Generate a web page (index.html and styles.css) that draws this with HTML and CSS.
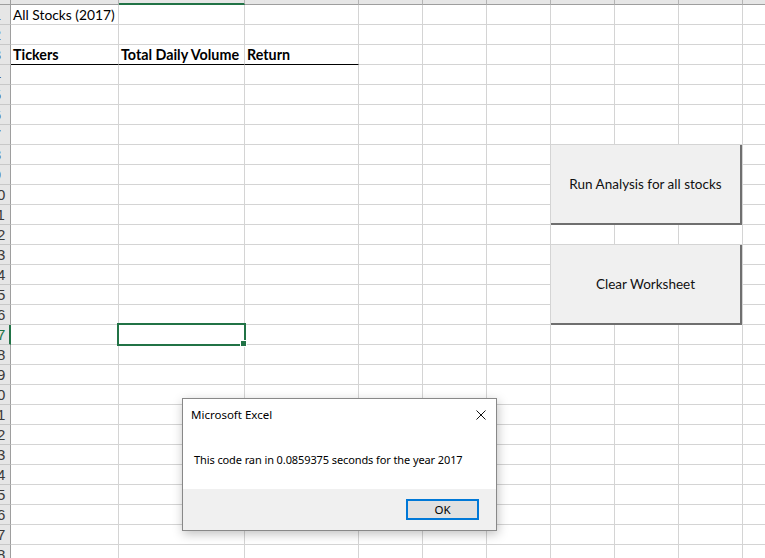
FILE: index.html
```html
<!DOCTYPE html>
<html>
<head>
<meta charset="utf-8">
<link rel="stylesheet" href="styles.css">
</head>
<body>
<div class="sheet">
  <div class="row colheads">
    <span class="ch corner"></span><span class="ch"></span><span class="ch sel"></span><span class="ch"></span><span class="ch"></span><span class="ch"></span><span class="ch"></span><span class="ch"></span><span class="ch"></span><span class="ch"></span><span class="ch"></span><span class="ch"></span>
  </div>
  <div class="row"><span class="rh"><span>1</span></span><span class="c txt">All Stocks (2017)</span><span class="c"></span><span class="c"></span><span class="c"></span><span class="c"></span><span class="c"></span><span class="c"></span><span class="c"></span><span class="c"></span><span class="c"></span><span class="c"></span></div>
  <div class="row"><span class="rh"><span>2</span></span><span class="c"></span><span class="c"></span><span class="c"></span><span class="c"></span><span class="c"></span><span class="c"></span><span class="c"></span><span class="c"></span><span class="c"></span><span class="c"></span><span class="c"></span></div>
  <div class="row"><span class="rh"><span>3</span></span><span class="c txt bold ruled">Tickers</span><span class="c txt bold ruled">Total Daily Volume</span><span class="c txt bold ruled">Return</span><span class="c"></span><span class="c"></span><span class="c"></span><span class="c"></span><span class="c"></span><span class="c"></span><span class="c"></span><span class="c"></span></div>
  <div class="row"><span class="rh"><span>4</span></span><span class="c"></span><span class="c"></span><span class="c"></span><span class="c"></span><span class="c"></span><span class="c"></span><span class="c"></span><span class="c"></span><span class="c"></span><span class="c"></span><span class="c"></span></div>
  <div class="row"><span class="rh"><span>5</span></span><span class="c"></span><span class="c"></span><span class="c"></span><span class="c"></span><span class="c"></span><span class="c"></span><span class="c"></span><span class="c"></span><span class="c"></span><span class="c"></span><span class="c"></span></div>
  <div class="row"><span class="rh"><span>6</span></span><span class="c"></span><span class="c"></span><span class="c"></span><span class="c"></span><span class="c"></span><span class="c"></span><span class="c"></span><span class="c"></span><span class="c"></span><span class="c"></span><span class="c"></span></div>
  <div class="row"><span class="rh"><span>7</span></span><span class="c"></span><span class="c"></span><span class="c"></span><span class="c"></span><span class="c"></span><span class="c"></span><span class="c"></span><span class="c"></span><span class="c"></span><span class="c"></span><span class="c"></span></div>
  <div class="row"><span class="rh"><span>8</span></span><span class="c"></span><span class="c"></span><span class="c"></span><span class="c"></span><span class="c"></span><span class="c"></span><span class="c"></span><span class="c"></span><span class="c"></span><span class="c"></span><span class="c"></span></div>
  <div class="row"><span class="rh"><span>9</span></span><span class="c"></span><span class="c"></span><span class="c"></span><span class="c"></span><span class="c"></span><span class="c"></span><span class="c"></span><span class="c"></span><span class="c"></span><span class="c"></span><span class="c"></span></div>
  <div class="row"><span class="rh"><span>10</span></span><span class="c"></span><span class="c"></span><span class="c"></span><span class="c"></span><span class="c"></span><span class="c"></span><span class="c"></span><span class="c"></span><span class="c"></span><span class="c"></span><span class="c"></span></div>
  <div class="row"><span class="rh"><span>11</span></span><span class="c"></span><span class="c"></span><span class="c"></span><span class="c"></span><span class="c"></span><span class="c"></span><span class="c"></span><span class="c"></span><span class="c"></span><span class="c"></span><span class="c"></span></div>
  <div class="row"><span class="rh"><span>12</span></span><span class="c"></span><span class="c"></span><span class="c"></span><span class="c"></span><span class="c"></span><span class="c"></span><span class="c"></span><span class="c"></span><span class="c"></span><span class="c"></span><span class="c"></span></div>
  <div class="row"><span class="rh"><span>13</span></span><span class="c"></span><span class="c"></span><span class="c"></span><span class="c"></span><span class="c"></span><span class="c"></span><span class="c"></span><span class="c"></span><span class="c"></span><span class="c"></span><span class="c"></span></div>
  <div class="row"><span class="rh"><span>14</span></span><span class="c"></span><span class="c"></span><span class="c"></span><span class="c"></span><span class="c"></span><span class="c"></span><span class="c"></span><span class="c"></span><span class="c"></span><span class="c"></span><span class="c"></span></div>
  <div class="row"><span class="rh"><span>15</span></span><span class="c"></span><span class="c"></span><span class="c"></span><span class="c"></span><span class="c"></span><span class="c"></span><span class="c"></span><span class="c"></span><span class="c"></span><span class="c"></span><span class="c"></span></div>
  <div class="row"><span class="rh"><span>16</span></span><span class="c"></span><span class="c"></span><span class="c"></span><span class="c"></span><span class="c"></span><span class="c"></span><span class="c"></span><span class="c"></span><span class="c"></span><span class="c"></span><span class="c"></span></div>
  <div class="row"><span class="rh active"><span>17</span></span><span class="c"></span><span class="c active"></span><span class="c"></span><span class="c"></span><span class="c"></span><span class="c"></span><span class="c"></span><span class="c"></span><span class="c"></span><span class="c"></span><span class="c"></span></div>
  <div class="row"><span class="rh"><span>18</span></span><span class="c"></span><span class="c"></span><span class="c"></span><span class="c"></span><span class="c"></span><span class="c"></span><span class="c"></span><span class="c"></span><span class="c"></span><span class="c"></span><span class="c"></span></div>
  <div class="row"><span class="rh"><span>19</span></span><span class="c"></span><span class="c"></span><span class="c"></span><span class="c"></span><span class="c"></span><span class="c"></span><span class="c"></span><span class="c"></span><span class="c"></span><span class="c"></span><span class="c"></span></div>
  <div class="row"><span class="rh"><span>20</span></span><span class="c"></span><span class="c"></span><span class="c"></span><span class="c"></span><span class="c"></span><span class="c"></span><span class="c"></span><span class="c"></span><span class="c"></span><span class="c"></span><span class="c"></span></div>
  <div class="row"><span class="rh"><span>21</span></span><span class="c"></span><span class="c"></span><span class="c"></span><span class="c"></span><span class="c"></span><span class="c"></span><span class="c"></span><span class="c"></span><span class="c"></span><span class="c"></span><span class="c"></span></div>
  <div class="row"><span class="rh"><span>22</span></span><span class="c"></span><span class="c"></span><span class="c"></span><span class="c"></span><span class="c"></span><span class="c"></span><span class="c"></span><span class="c"></span><span class="c"></span><span class="c"></span><span class="c"></span></div>
  <div class="row"><span class="rh"><span>23</span></span><span class="c"></span><span class="c"></span><span class="c"></span><span class="c"></span><span class="c"></span><span class="c"></span><span class="c"></span><span class="c"></span><span class="c"></span><span class="c"></span><span class="c"></span></div>
  <div class="row"><span class="rh"><span>24</span></span><span class="c"></span><span class="c"></span><span class="c"></span><span class="c"></span><span class="c"></span><span class="c"></span><span class="c"></span><span class="c"></span><span class="c"></span><span class="c"></span><span class="c"></span></div>
  <div class="row"><span class="rh"><span>25</span></span><span class="c"></span><span class="c"></span><span class="c"></span><span class="c"></span><span class="c"></span><span class="c"></span><span class="c"></span><span class="c"></span><span class="c"></span><span class="c"></span><span class="c"></span></div>
  <div class="row"><span class="rh"><span>26</span></span><span class="c"></span><span class="c"></span><span class="c"></span><span class="c"></span><span class="c"></span><span class="c"></span><span class="c"></span><span class="c"></span><span class="c"></span><span class="c"></span><span class="c"></span></div>
  <div class="row"><span class="rh"><span>27</span></span><span class="c"></span><span class="c"></span><span class="c"></span><span class="c"></span><span class="c"></span><span class="c"></span><span class="c"></span><span class="c"></span><span class="c"></span><span class="c"></span><span class="c"></span></div>
  <div class="row"><span class="rh"><span>28</span></span><span class="c"></span><span class="c"></span><span class="c"></span><span class="c"></span><span class="c"></span><span class="c"></span><span class="c"></span><span class="c"></span><span class="c"></span><span class="c"></span><span class="c"></span></div>

  <button class="macro-btn run">Run Analysis for all stocks</button>
  <button class="macro-btn clear">Clear Worksheet</button>

  <div class="dialog">
    <div class="dlg-title">
      <span>Microsoft Excel</span>
      <svg class="close" width="10" height="10" viewBox="0 0 10 10"><path d="M0.5 0.5 L9.5 9.5 M9.5 0.5 L0.5 9.5" stroke="#111" stroke-width="1" fill="none"/></svg>
    </div>
    <div class="dlg-body">This code ran in 0.0859375 seconds for the year 2017</div>
    <div class="dlg-foot"><button class="ok">OK</button></div>
  </div>
</div>
</body>
</html>
```
FILE: styles.css
```css
* { box-sizing: border-box; }
html, body { margin: 0; padding: 0; }
body {
  width: 765px;
  height: 558px;
  overflow: hidden;
  background: #fff;
}
.sheet {
  position: relative;
  width: 765px;
  height: 558px;
  overflow: hidden;
  font-family: Lato, "Liberation Sans", sans-serif;
}
.row {
  display: grid;
  grid-template-columns: 11px 108px 126px 114px repeat(8, 64px);
  height: 20px;
}
.colheads { height: 5px; }
.ch {
  background: #e6e6e6;
  border-right: 1px solid #b4b4b4;
  border-bottom: 1px solid #9e9e9e;
}
.ch.corner { border-right-color: #9e9e9e; }
.ch.sel { border-bottom: 2px solid #217346; }

.rh {
  background: #e6e6e6;
  border-right: 1px solid #9e9e9e;
  border-bottom: 1px solid #c8c8c8;
  overflow: hidden;
  font-family: "Liberation Sans", sans-serif;
  font-size: 15px;
  color: #3a3a3a;
  line-height: 19px;
}
.rh span {
  display: block;
  width: 30px;
  margin-left: -18px;
  text-align: center;
}
.rh.active { border-right: 2px solid #217346; color: #217346; }

.c {
  border-right: 1px solid #d4d4d4;
  border-bottom: 1px solid #d4d4d4;
  white-space: nowrap;
}
.c.txt {
  display: flex;
  align-items: flex-end;
  padding: 0 0 0 2px;
  font-size: 13.8px;
  line-height: 18px;
  color: #000;
  overflow: visible;
}
.c.bold { font-weight: bold; font-size: 14.3px; }
.c.ruled { border-bottom-color: #000; }
.c.active { position: relative; }
.c.active::after {
  content: "";
  position: absolute;
  left: -2px;
  top: -2px;
  right: -2px;
  bottom: -2px;
  border: 2px solid #217346;
}
.c.active::before {
  content: "";
  position: absolute;
  right: -3px;
  bottom: -3px;
  width: 5px;
  height: 5px;
  background: #217346;
  border: 1px solid #fff;
  box-sizing: content-box;
  z-index: 1;
}

.macro-btn {
  position: absolute;
  left: 551px;
  width: 191px;
  height: 80px;
  margin: 0;
  padding: 0;
  background: #f0f0f0;
  border: 0;
  border-right: 2px solid #6f6f6f;
  border-bottom: 2px solid #6f6f6f;
  font-family: Lato, "Liberation Sans", sans-serif;
  font-size: 13.5px;
  color: #111;
}
.macro-btn.run { top: 145px; }
.macro-btn.clear { top: 245px; }

.dialog {
  position: absolute;
  left: 182px;
  top: 398px;
  width: 315px;
  height: 133px;
  background: #fff;
  border: 1px solid #888;
  box-shadow: 1px 3px 10px rgba(0,0,0,0.25);
  display: flex;
  flex-direction: column;
  font-family: "Noto Sans", sans-serif;
  font-size: 11.5px;
  color: #000;
}
.dlg-title {
  height: 31px;
  display: flex;
  align-items: center;
  justify-content: space-between;
  padding: 0 10px 0 8px;
}
.dlg-body {
  flex: 1;
  padding: 22px 0 0 11px;
  line-height: 16px;
  font-size: 11px;
  letter-spacing: -0.1px;
}
.dlg-foot {
  height: 41px;
  background: #f0f0f0;
  display: flex;
  justify-content: flex-end;
  align-items: flex-start;
  padding: 10px 17px 0 0;
}
.ok {
  width: 73px;
  height: 21px;
  margin: 0;
  padding: 0;
  background: #e1e1e1;
  border: 2px solid #0078d7;
  font-family: "Noto Sans", sans-serif;
  font-size: 11.5px;
  color: #000;
}
```
